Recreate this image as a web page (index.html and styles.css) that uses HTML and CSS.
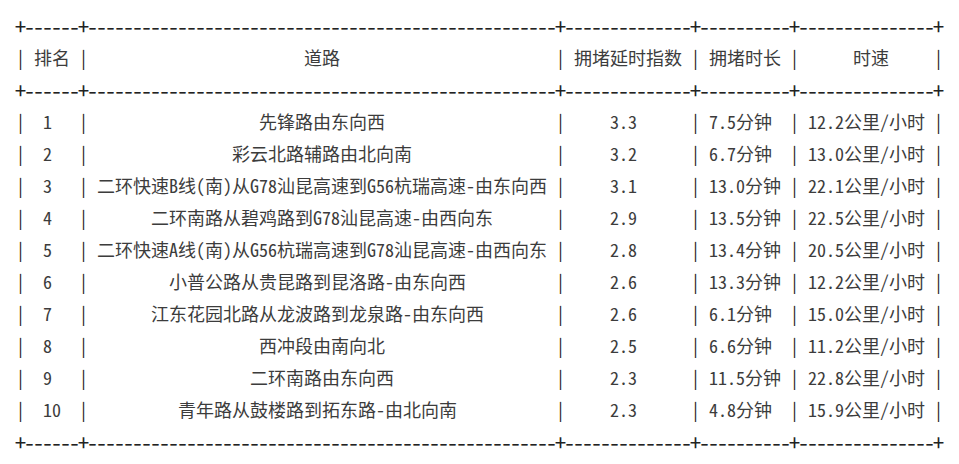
FILE: index.html
```html
<!DOCTYPE html>
<html lang="zh-CN">
<head>
<meta charset="utf-8">
<title>拥堵道路排名</title>
<link rel="stylesheet" href="styles.css">
</head>
<body>
<div class="table">
  <div class="rule">+------+----------------------------------------------------+--------------+----------+---------------+</div>
  <div class="row head"><span class="sep">|</span><span class="cell c1"> 排名 </span><span class="sep">|</span><span class="cell c2">                        道路                        </span><span class="sep">|</span><span class="cell c3"> 拥堵延时指数 </span><span class="sep">|</span><span class="cell c4"> 拥堵时长 </span><span class="sep">|</span><span class="cell c5">      时速     </span><span class="sep">|</span></div>
  <div class="rule">+------+----------------------------------------------------+--------------+----------+---------------+</div>
  <div class="row"><span class="sep">|</span><span class="cell c1">  1   </span><span class="sep">|</span><span class="cell c2">                   先锋路由东向西                   </span><span class="sep">|</span><span class="cell c3">     3.3      </span><span class="sep">|</span><span class="cell c4"> 7.5分钟  </span><span class="sep">|</span><span class="cell c5"> 12.2公里/小时 </span><span class="sep">|</span></div>
  <div class="row"><span class="sep">|</span><span class="cell c1">  2   </span><span class="sep">|</span><span class="cell c2">                彩云北路辅路由北向南                </span><span class="sep">|</span><span class="cell c3">     3.2      </span><span class="sep">|</span><span class="cell c4"> 6.7分钟  </span><span class="sep">|</span><span class="cell c5"> 13.0公里/小时 </span><span class="sep">|</span></div>
  <div class="row"><span class="sep">|</span><span class="cell c1">  3   </span><span class="sep">|</span><span class="cell c2"> 二环快速B线(南)从G78汕昆高速到G56杭瑞高速-由东向西 </span><span class="sep">|</span><span class="cell c3">     3.1      </span><span class="sep">|</span><span class="cell c4"> 13.0分钟 </span><span class="sep">|</span><span class="cell c5"> 22.1公里/小时 </span><span class="sep">|</span></div>
  <div class="row"><span class="sep">|</span><span class="cell c1">  4   </span><span class="sep">|</span><span class="cell c2">       二环南路从碧鸡路到G78汕昆高速-由西向东       </span><span class="sep">|</span><span class="cell c3">     2.9      </span><span class="sep">|</span><span class="cell c4"> 13.5分钟 </span><span class="sep">|</span><span class="cell c5"> 22.5公里/小时 </span><span class="sep">|</span></div>
  <div class="row"><span class="sep">|</span><span class="cell c1">  5   </span><span class="sep">|</span><span class="cell c2"> 二环快速A线(南)从G56杭瑞高速到G78汕昆高速-由西向东 </span><span class="sep">|</span><span class="cell c3">     2.8      </span><span class="sep">|</span><span class="cell c4"> 13.4分钟 </span><span class="sep">|</span><span class="cell c5"> 20.5公里/小时 </span><span class="sep">|</span></div>
  <div class="row"><span class="sep">|</span><span class="cell c1">  6   </span><span class="sep">|</span><span class="cell c2">         小普公路从贵昆路到昆洛路-由东向西          </span><span class="sep">|</span><span class="cell c3">     2.6      </span><span class="sep">|</span><span class="cell c4"> 13.3分钟 </span><span class="sep">|</span><span class="cell c5"> 12.2公里/小时 </span><span class="sep">|</span></div>
  <div class="row"><span class="sep">|</span><span class="cell c1">  7   </span><span class="sep">|</span><span class="cell c2">       江东花园北路从龙波路到龙泉路-由东向西        </span><span class="sep">|</span><span class="cell c3">     2.6      </span><span class="sep">|</span><span class="cell c4"> 6.1分钟  </span><span class="sep">|</span><span class="cell c5"> 15.0公里/小时 </span><span class="sep">|</span></div>
  <div class="row"><span class="sep">|</span><span class="cell c1">  8   </span><span class="sep">|</span><span class="cell c2">                   西冲段由南向北                   </span><span class="sep">|</span><span class="cell c3">     2.5      </span><span class="sep">|</span><span class="cell c4"> 6.6分钟  </span><span class="sep">|</span><span class="cell c5"> 11.2公里/小时 </span><span class="sep">|</span></div>
  <div class="row"><span class="sep">|</span><span class="cell c1">  9   </span><span class="sep">|</span><span class="cell c2">                  二环南路由东向西                  </span><span class="sep">|</span><span class="cell c3">     2.3      </span><span class="sep">|</span><span class="cell c4"> 11.5分钟 </span><span class="sep">|</span><span class="cell c5"> 22.8公里/小时 </span><span class="sep">|</span></div>
  <div class="row"><span class="sep">|</span><span class="cell c1">  10  </span><span class="sep">|</span><span class="cell c2">          青年路从鼓楼路到拓东路-由北向南           </span><span class="sep">|</span><span class="cell c3">     2.3      </span><span class="sep">|</span><span class="cell c4"> 4.8分钟  </span><span class="sep">|</span><span class="cell c5"> 15.9公里/小时 </span><span class="sep">|</span></div>
  <div class="rule">+------+----------------------------------------------------+--------------+----------+---------------+</div>
</div>
</body>
</html>
```

FILE: styles.css
```css
html, body {
  margin: 0;
  padding: 0;
  background: #ffffff;
}

.table {
  padding: 9px 0 0 16px;
  font-family: "Noto Sans Mono CJK SC", "Noto Sans CJK SC", monospace;
  font-size: 18px;
  line-height: 32px;
  color: #3c3c3c;
}

.rule {
  white-space: pre;
  height: 32px;
  font-size: 22px;
  letter-spacing: -2px;
  margin-left: -1px;
  color: #222222;
}

.row {
  display: flex;
  height: 32px;
  white-space: pre;
}

.sep {
  flex: 0 0 9px;
  width: 9px;
  color: #222222;
}

.cell {
  display: block;
  overflow: visible;
}

.c1 { flex: 0 0 54px; }
.c2 { flex: 0 0 468px; }
.c3 { flex: 0 0 126px; }
.c4 { flex: 0 0 90px; }
.c5 { flex: 0 0 135px; }
```
